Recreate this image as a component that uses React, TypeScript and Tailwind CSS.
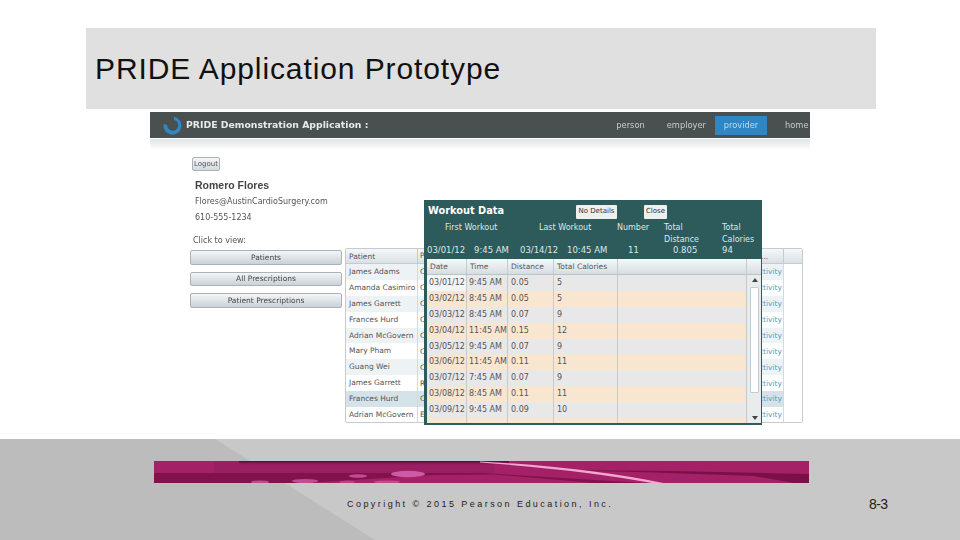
const patients = [
  ["James Adams", "C"],
  ["Amanda Casimiro", "C"],
  ["James Garrett", "C"],
  ["Frances Hurd", "C"],
  ["Adrian McGovern", "C"],
  ["Mary Pham", "C"],
  ["Guang Wei", "C"],
  ["James Garrett", "R"],
  ["Frances Hurd", "C"],
  ["Adrian McGovern", "E"],
];

const workouts = [
  ["03/01/12", "9:45 AM", "0.05", "5"],
  ["03/02/12", "8:45 AM", "0.05", "5"],
  ["03/03/12", "8:45 AM", "0.07", "9"],
  ["03/04/12", "11:45 AM", "0.15", "12"],
  ["03/05/12", "9:45 AM", "0.07", "9"],
  ["03/06/12", "11:45 AM", "0.11", "11"],
  ["03/07/12", "7:45 AM", "0.07", "9"],
  ["03/08/12", "8:45 AM", "0.11", "11"],
  ["03/09/12", "9:45 AM", "0.09", "10"],
];

function SideButton({ label }: { label: string }) {
  return (
    <button className="block h-[14.5px] w-[152px] rounded-[2px] border border-[#aab2b8] bg-gradient-to-b from-[#f4f6f7] to-[#c9d2d8] text-[7.5px] leading-none text-[#444]">
      {label}
    </button>
  );
}

function Nav() {
  return (
    <div className="flex h-[26px] items-center bg-[#4a4f4f] pl-[13px] pr-[1px]">
      <svg width="19" height="19" viewBox="0 0 19 19">
        <path d="M11 0.8 A9 9 0 1 1 0.6 8 L4.2 9 A5.5 5.5 0 1 0 11 4 Z" fill="#2f88c4" />
      </svg>
      <span className="ml-[4px] text-[9.3px] font-bold text-[#e8eaea]">PRIDE Demonstration Application :</span>
      <div className="ml-auto flex h-full items-center text-[8.3px] text-[#c9cccc]">
        <span className="pl-[1px]">person</span>
        <span className="ml-[22px]">employer</span>
        <span className="ml-[9px] flex h-[19px] w-[52px] items-center justify-center bg-[#2f86c4] text-[#b9dcf2]">provider</span>
        <span className="ml-[18px] w-[24px]">home</span>
      </div>
    </div>
  );
}

function PatientTable() {
  return (
    <div className="h-[175px] w-[458px] overflow-hidden rounded-[2px] border border-[#c5ccd0] bg-white text-[7.5px] text-[#555]">
      <div className="flex h-[15px] items-center border-b border-[#c5ccd0] bg-gradient-to-b from-[#f5f7f8] to-[#d9e0e4]">
        <span className="w-[72px] border-r border-[#c5ccd0] pl-[3px] leading-[15px]">Patient</span>
        <span className="pl-[2px]">P</span>
        <span className="ml-auto w-[22px] leading-[15px]">...</span>
        <span className="w-[19px] border-l border-[#c5ccd0] leading-[15px]">&nbsp;</span>
      </div>
      {patients.map(([name, code], i) => (
        <div
          key={i}
          className={`flex h-[15.9px] items-center ${i === 8 ? "bg-[#d5e2ea]" : i % 2 === 0 ? "bg-[#edf2f5]" : "bg-white"}`}
        >
          <span className="w-[72px] border-r border-[#d5dadd] pl-[3px] leading-[15.9px]">{name}</span>
          <span className="pl-[2px]">{code}</span>
          <span className="ml-auto whitespace-nowrap pr-[1px] text-[#5b9bc8]">Activity</span>
          <span className="w-[19px] self-stretch border-l border-[#d5dadd] bg-white" />
        </div>
      ))}
    </div>
  );
}

function Triangle({ down }: { down?: boolean }) {
  return (
    <svg width="6" height="4" viewBox="0 0 6 4" className="shrink-0">
      <polygon points={down ? "0,0 6,0 3,4" : "3,0 6,4 0,4"} fill="#444" />
    </svg>
  );
}

function WorkoutDialog() {
  return (
    <div className="absolute left-[274px] top-[88px] h-[225px] w-[338px] border-[1px] border-[#2d5a5a] bg-[#2d5a5a] text-[8px] text-[#dfe8e8]">
      <div className="flex h-[21px] items-center pl-[3px]">
        <span className="w-[148px] text-[9.8px] font-bold text-white">Workout Data</span>
        <button className="h-[14px] w-[41px] rounded-[1px] bg-[#eef0f0] text-[7px] leading-none text-[#333]">No Details</button>
        <button className="ml-[27px] h-[14px] w-[23px] rounded-[1px] bg-[#eef0f0] text-[7px] leading-none text-[#333]">Close</button>
      </div>
      <div className="flex h-[22px] items-start leading-[12px]">
        <span className="w-[114px] pl-[20px]">First Workout</span>
        <span className="w-[78px]">Last Workout</span>
        <span className="w-[47px]">Number</span>
        <span className="w-[58px]">Total<br />Distance</span>
        <span>Total<br />Calories</span>
      </div>
      <div className="flex h-[12px] items-center text-[8.5px]">
        <span className="w-[49px] pl-[2px]">03/01/12</span>
        <span className="w-[46px]">9:45 AM</span>
        <span className="w-[47px]">03/14/12</span>
        <span className="w-[60px]">10:45 AM</span>
        <span className="w-[44px] pl-[1px]">11</span>
        <span className="w-[50px] pl-[2px]">0.805</span>
        <span className="pl-[1px]">94</span>
      </div>
      <div className="ml-[2px] mt-[3px] h-[164px] w-[334px] overflow-hidden bg-[#e8e8e8] text-[#555]">
        <div className="flex h-[16px] items-center border-b border-[#b9c3c8] bg-gradient-to-b from-[#f6f8f9] to-[#d6dde1] text-[7.5px]">
          <span className="w-[40px] border-r border-[#c5ccd0] pl-[3px] leading-[15px]">Date</span>
          <span className="w-[41px] border-r border-[#c5ccd0] pl-[3px] leading-[15px]">Time</span>
          <span className="w-[46px] border-r border-[#c5ccd0] pl-[3px] leading-[15px]">Distance</span>
          <span className="w-[64px] border-r border-[#c5ccd0] pl-[3px] leading-[15px]">Total Calories</span>
          <span className="w-[129px] border-r border-[#c5ccd0] leading-[15px]">&nbsp;</span>
        </div>
        <div className="relative">
          {workouts.map((w, i) => (
            <div key={i} className={`flex h-[15.9px] items-center ${i % 2 === 0 ? "bg-[#e8e8e8]" : "bg-[#f9e6d0]"}`}>
              <span className={`w-[40px] self-stretch border-r border-[#c9c9c9] pl-[2px] leading-[15.9px] ${i === 0 ? "bg-[#f3f6f7]" : ""}`}>{w[0]}</span>
              <span className="w-[41px] self-stretch border-r border-[#c9c9c9] pl-[2px] leading-[15.9px]">{w[1]}</span>
              <span className="w-[46px] self-stretch border-r border-[#c9c9c9] pl-[3px] leading-[15.9px]">{w[2]}</span>
              <span className="w-[64px] self-stretch border-r border-[#c9c9c9] pl-[3px] leading-[15.9px]">{w[3]}</span>
              <span className="w-[129px] self-stretch border-r border-[#c9c9c9]" />
            </div>
          ))}
          <div className="flex h-[6px]">
            <span className="w-[40px] border-r border-[#c9c9c9] bg-[#f9e6d0]" />
            <span className="w-[41px] border-r border-[#c9c9c9] bg-[#f9e6d0]" />
            <span className="w-[46px] border-r border-[#c9c9c9] bg-[#f9e6d0]" />
            <span className="w-[64px] border-r border-[#c9c9c9] bg-[#f9e6d0]" />
            <span className="w-[129px] border-r border-[#c9c9c9] bg-[#f9e6d0]" />
          </div>
          {/* scrollbar */}
          <div className="absolute right-0 top-0 flex h-[148px] w-[13px] flex-col items-center bg-[#e9eced] pt-[3px]">
            <Triangle />
            <div className="mt-[5px] h-[106px] w-[9px] shrink-0 rounded-[1px] border border-[#c5ccd0] bg-white" />
            <div className="mt-auto mb-[3px]">
              <Triangle down />
            </div>
          </div>
        </div>
      </div>
    </div>
  );
}

function FooterBar() {
  return (
    <svg className="block" width="655" height="22" viewBox="0 0 655 22">
      <defs>
        <linearGradient id="barTop" x1="0" y1="0" x2="0" y2="1">
          <stop offset="0" stopColor="#4a0c34" />
          <stop offset="1" stopColor="#a42168" stopOpacity="0" />
        </linearGradient>
      </defs>
      <rect width="655" height="22" fill="#a42168" />
      <rect x="60" y="0" width="280" height="12" fill="#8e1c5c" opacity="0.5" />
      <rect x="85" y="0" width="270" height="5" fill="url(#barTop)" />
      <path d="M0 12 L330 12 L490 22 L0 22 Z" fill="#82124c" />
      <path d="M150 22 L280 14 L340 13.5 L440 22 Z" fill="#a42168" />
      <path d="M400 9 L520 10 L655 13 L655 22 L640 22 L600 15 L500 11.5 Z" fill="#7a1048" />
      <path d="M326 0.5 Q430 6 509 22 L498 22 Q425 8.5 326 1.6 Z" fill="#f0a8d0" />
      <ellipse cx="254" cy="13" rx="17" ry="3.2" fill="#cc5aa4" />
      <ellipse cx="204" cy="15" rx="9" ry="1.8" fill="#c04c94" />
      <ellipse cx="151" cy="20" rx="13" ry="2" fill="#c04c94" />
      <ellipse cx="106" cy="21" rx="9" ry="1.6" fill="#c04c94" />
      <ellipse cx="233" cy="21" rx="13" ry="1.6" fill="#c04c94" />
      <ellipse cx="193" cy="21" rx="8" ry="1.4" fill="#b8428c" />
    </svg>
  );
}

export default function App() {
  return (
    <div className="relative flex h-[540px] w-[960px] flex-col overflow-hidden bg-white font-['Liberation_Sans',sans-serif]">
      <div className="ml-[86px] mt-[28px] flex h-[81px] w-[790px] items-center bg-[#e0e0e0] pl-[9px]">
        <h1 className="text-[30px] leading-none tracking-[0.9px] text-[#111]">PRIDE Application Prototype</h1>
      </div>

      {/* screenshot pasted in the slide */}
      <div className="relative ml-[150px] mt-[3px] h-[327px] w-[660px] font-['DejaVu_Sans',sans-serif] blur-[0.5px]">
        <Nav />
        <div className="h-[1px] bg-white" />
        <div className="h-[11px] bg-gradient-to-b from-[#e2e5e5] to-white" />
        <div className="flex pl-[40px] pt-[7px]">
          <div className="w-[155px]">
            <button className="ml-[2px] block h-[14px] w-[28px] rounded-[2px] border border-[#aab2b8] bg-gradient-to-b from-[#f4f6f7] to-[#d3dade] text-[7px] leading-none text-[#555]">Logout</button>
            <div className="ml-[5px] mt-[8px] font-['Liberation_Sans',sans-serif] text-[10.5px] font-bold leading-[12px] text-[#444]">Romero Flores</div>
            <div className="ml-[5px] mt-[5px] text-[8px] leading-[11px] text-[#555]">Flores@AustinCardioSurgery.com</div>
            <div className="ml-[5px] mt-[5px] text-[8px] leading-[11px] text-[#555]">610-555-1234</div>
            <div className="ml-[3px] mt-[12px] text-[8px] leading-[11px] text-[#555]">Click to view:</div>
            <div className="mt-[4px] flex flex-col gap-[7px]">
              <SideButton label="Patients" />
              <SideButton label="All Prescriptions" />
              <SideButton label="Patient Prescriptions" />
            </div>
          </div>
          <div className="pt-[91px]">
            <PatientTable />
          </div>
        </div>
        <WorkoutDialog />
      </div>

      <footer className="relative mt-auto h-[101px] bg-[#c8c8c8]">
        <svg className="absolute inset-0" width="960" height="101" viewBox="0 0 960 101">
          <polygon points="0,0 215,0 375,101 0,101" fill="#bcbcbc" />
        </svg>
        <div className="relative ml-[154px] mt-[22px] w-[655px]">
          <FooterBar />
        </div>
        <div className="relative mt-[15px] flex items-center">
          <span className="ml-[347px] whitespace-nowrap text-[9px] leading-[12px] tracking-[2.45px] text-[#222]">Copyright © 2015 Pearson Education, Inc.</span>
          <span className="absolute left-[869px] top-[-2px] text-[14px] leading-[16px] tracking-[-0.6px] text-[#222]">8-3</span>
        </div>
      </footer>
    </div>
  );
}
